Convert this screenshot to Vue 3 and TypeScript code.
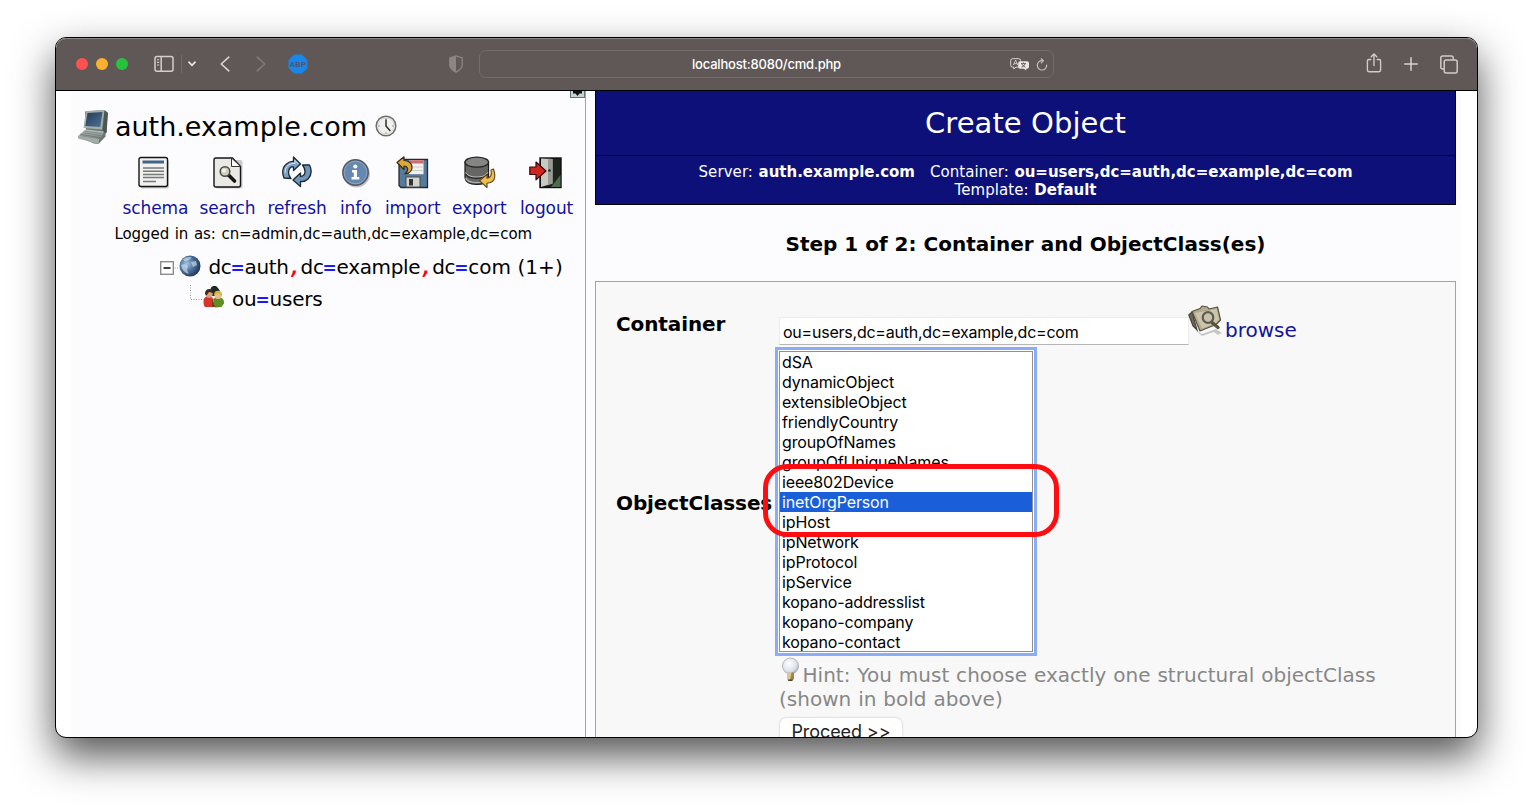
<script setup lang="ts">
interface Tool {
  id: string
  label: string
}

const tools: Tool[] = [
  { id: 'schema', label: 'schema' },
  { id: 'search', label: 'search' },
  { id: 'refresh', label: 'refresh' },
  { id: 'info', label: 'info' },
  { id: 'import', label: 'import' },
  { id: 'export', label: 'export' },
  { id: 'logout', label: 'logout' },
]

const objectClasses: string[] = [
  'dSA',
  'dynamicObject',
  'extensibleObject',
  'friendlyCountry',
  'groupOfNames',
  'groupOfUniqueNames',
  'ieee802Device',
  'inetOrgPerson',
  'ipHost',
  'ipNetwork',
  'ipProtocol',
  'ipService',
  'kopano-addresslist',
  'kopano-company',
  'kopano-contact',
]
const selected = 'inetOrgPerson'
</script>

<template>
  <div class="desktop">
    <div class="window">
      <header class="toolbar">
        <div class="lights"><i class="red" /><i class="yellow" /><i class="green" /></div>
        <svg class="t-sidebar" width="20" height="18" viewBox="0 0 20 18" fill="none" stroke="#d3cfcf" stroke-width="1.5">
          <rect x="1" y="1.6" width="18" height="14.6" rx="2" />
          <path d="M7.2 1.6v14.6" />
          <path d="M3 4.8h2.2M3 7.4h2.2M3 10h2.2" stroke-width="1.1" />
        </svg>
        <span class="t-divider" />
        <svg class="t-chev" width="8" height="6" viewBox="0 0 8 6" fill="none" stroke="#e8e6e6" stroke-width="1.7" stroke-linecap="round" stroke-linejoin="round">
          <path d="M1 1.2 4 4.3 7 1.2" />
        </svg>
        <svg class="t-back" width="10" height="16" viewBox="0 0 10 16" fill="none" stroke="#dad6d6" stroke-width="1.6" stroke-linecap="round" stroke-linejoin="round">
          <path d="M8.8 1.2 1.2 8l7.6 6.8" />
        </svg>
        <svg class="t-fwd" width="10" height="16" viewBox="0 0 10 16" fill="none" stroke="#827b7b" stroke-width="1.6" stroke-linecap="round" stroke-linejoin="round">
          <path d="M1.2 1.2 8.8 8l-7.6 6.8" />
        </svg>
        <svg class="t-abp" width="20" height="20" viewBox="0 0 20 20">
          <path d="M6 .5h8L19.5 6v8L14 19.500H6L.5 14V6z" fill="#1b86ea" />
          <text x="10" y="12.600" text-anchor="middle" class="abp-text">ABP</text>
        </svg>
        <svg class="t-shield" width="14" height="18" viewBox="0 0 14 18">
          <path d="M7 .9 13.200 3v7.200c0 3.300-3.600 5.500-6.200 6.900C4.400 15.700.8 13.500.8 10.200V3z" fill="none" stroke="#8b8585" stroke-width="1.300" />
          <path d="M7 .9V17C4.400 15.700.8 13.500.8 10.200V3z" fill="#8b8585" />
        </svg>
        <div class="url">
          <span />
          <span class="url-text">localhost:8080/cmd.php</span>
          <div class="url-icons">
            <svg width="20" height="13" viewBox="0 0 20 13">
              <path d="M2.500.7h6.300q1.800 0 1.800 1.800v4.800q0 1.800-1.800 1.800H6L3.800 11V9.100H2.500Q.7 9.100.7 7.300V2.500Q.7.7 2.500.7z" fill="none" stroke="#d8d4d4" stroke-width="1" />
              <path d="M3.300 7.200 5.600 2.300 7.900 7.200M4.100 5.700h3" fill="none" stroke="#d8d4d4" stroke-width=".9" />
              <path d="M10.200 3.300h6.800q2 0 2 2v3.500q0 2-2 2h-.8v1.800L14 10.800h-3.800q-2 0-2-2V5.300q0-2 2-2z" fill="#e9e7e7" />
              <path d="M11 5.600h5M13.500 4.500v1.100M15.200 5.800Q14 8.400 11.500 9.200M11.800 5.900q1 2.300 3.600 3.300" fill="none" stroke="#5f5858" stroke-width=".9" />
            </svg>
            <svg width="12" height="13" viewBox="0 0 12 13" fill="none" stroke="#c4bfbf" stroke-width="1.200" stroke-linecap="round" stroke-linejoin="round">
              <path d="M10.700 7.200A4.700 4.700 0 1 1 6.200 2.600" />
              <path d="M5.200.8 7.400 2.700 5.300 4.800" />
            </svg>
          </div>
        </div>
        <svg class="t-share" width="16" height="20" viewBox="0 0 16 20" fill="none" stroke="#cfcbcb" stroke-width="1.400" stroke-linecap="round" stroke-linejoin="round">
          <path d="M4.800 6.500H3q-1.600 0-1.600 1.600v9Q1.400 18.800 3 18.800h10q1.600 0 1.600-1.700v-9q0-1.600-1.600-1.600h-1.800" />
          <path d="M8 12.500V1.200M5.200 3.800 8 1l2.800 2.800" />
        </svg>
        <svg class="t-plus" width="14" height="14" viewBox="0 0 14 14" stroke="#d8d4d4" stroke-width="1.500" stroke-linecap="round">
          <path d="M7 .8v12.400M.8 7h12.400" />
        </svg>
        <svg class="t-tabs" width="18" height="19" viewBox="0 0 18 19" fill="none" stroke="#cfcbcb" stroke-width="1.500" stroke-linejoin="round">
          <rect x="4.200" y="5" width="13" height="13" rx="2" />
          <path d="M4 14H2.800q-2 0-2-2V3q0-2 2-2h8.400q2 0 2 2v1.800" />
        </svg>
      </header>

      <div class="page">
        <aside class="sidebar">
          <div class="expander">
            <svg width="15" height="15" viewBox="0 0 15 15">
              <rect x=".5" y=".5" width="14" height="14" fill="#c5d3d6" stroke="#66737a" />
              <path d="M6 3h3v5h3v2.500H9.500L7.500 13 5.500 10.500H3V8h3z" fill="#111" />
            </svg>
          </div>

          <div class="server">
            <svg width="34" height="38" viewBox="0 0 34 38">
              <defs>
                <linearGradient id="screen" x1="0" y1="0" x2="1" y2="1">
                  <stop offset="0" stop-color="#243a55" />
                  <stop offset="1" stop-color="#4f7396" />
                </linearGradient>
                <linearGradient id="body" x1="0" y1="0" x2="0" y2="1">
                  <stop offset="0" stop-color="#c4cac6" />
                  <stop offset="1" stop-color="#76807c" />
                </linearGradient>
              </defs>
              <path d="M8 3.500 26 2l4.500 2.500-1 20L21 36l-4-.5L2 29l1-3 6-3z" fill="#6d7874" />
              <path d="M9 3 27.500 2 25 21.500 6.500 20z" fill="#a3aeab" />
              <path d="M10.500 5 25.500 4 23.300 19 8.300 18z" fill="url(#screen)" />
              <path d="M27.500 2 31 5 29.500 25l-4-1z" fill="#4c5753" />
              <path d="M8 21.500 27 23.500 23 31 2 27.500z" fill="url(#body)" />
              <path d="M1 27.500 22.500 31 21.500 36 1 30.500z" fill="#a2aba7" />
              <path d="M4 26.500 23 29.500M6 24.800l18 2.800M7.500 23.200l17 2.300" stroke="#68736f" stroke-width=".7" fill="none" />
              <path d="M22.500 31 28.500 25v3.500L21.500 36z" fill="#6b7571" />
            </svg>
            <span class="server-name">auth.example.com</span>
            <svg class="clock" width="22" height="22" viewBox="0 0 22 22">
              <circle cx="11" cy="11" r="9.800" fill="#f1f1ef" stroke="#6e6e6c" stroke-width="1.500" />
              <circle cx="11" cy="11" r="8" fill="none" stroke="#dadad8" stroke-width="1" />
              <path d="M11 3v2M11 17v2M3 11h2M17 11h2" stroke="#999" stroke-width="1" />
              <path d="M11 4.500V11l4.300 5" fill="none" stroke="#2c2c2c" stroke-width="1.500" />
            </svg>
          </div>

          <nav class="tools">
            <a v-for="tool in tools" :key="tool.id" class="tool">
              <svg width="34" height="34" viewBox="0 0 34 34">
                <template v-if="tool.id === 'schema'">
                  <rect x="3.500" y="3.500" width="28.500" height="29" rx="2" fill="#000" opacity=".2" />
                  <rect x="2" y="1.500" width="28.500" height="29" rx="2" fill="#f1f1f0" stroke="#151515" stroke-width="1.400" />
                  <rect x="5.500" y="4.500" width="21.500" height="3" fill="#3f6687" />
                  <path d="M6 12h21M6 15.200h21M6 18.400h21M6 21.600h21M6 25.500h13" stroke="#777" stroke-width="1.500" />
                </template>
                <template v-else-if="tool.id === 'search'">
                  <rect x="4.500" y="4" width="27" height="28.500" rx="2" fill="#000" opacity=".2" />
                  <path d="M5 2h16.500L29.500 10.500V29q0 2-2 2H5q-2 0-2-2V4q0-2 2-2z" fill="#eae9e6" stroke="#151515" stroke-width="1.400" />
                  <path d="M20.500 2v8.500h9z" fill="#fff" stroke="#333" stroke-width="1" />
                  <path d="M17.500 19 23.500 25" stroke="#151515" stroke-width="3.600" stroke-linecap="round" />
                  <circle cx="14" cy="15.500" r="4.800" fill="#cfd0bf" stroke="#4b4b44" stroke-width="1.500" />
                  <circle cx="13" cy="14.500" r="2" fill="#f4f4ea" />
                </template>
                <template v-else-if="tool.id === 'refresh'">
                  <path d="M4 22Q.5 13 6.500 8 10 5 13.500 5.500V1l7 7-7 6.500V11Q9 10.500 8.500 16 8.500 20 11 22.500z" fill="#7c9fc3" stroke="#1b2733" stroke-width="1.300" stroke-linejoin="round" />
                  <path d="M29.500 9Q33.500 17 28 23 25 26 20.500 25.500V30.500l-7.500-6.500 7.500-7V20.500Q25 20 25 15.500 25 12 22.500 9z" fill="#6f95bb" stroke="#1b2733" stroke-width="1.300" stroke-linejoin="round" />
                  <path d="M5 17Q5 9 12 7.500h3V4.500l3.500 3.500" fill="none" stroke="#d7e4f0" stroke-width="1" />
                </template>
                <template v-else-if="tool.id === 'info'">
                  <circle cx="17.500" cy="18" r="13.500" fill="#000" opacity=".22" />
                  <circle cx="16.500" cy="16.500" r="12.700" fill="#6688b0" stroke="#56595e" stroke-width="1.500" />
                  <circle cx="16.500" cy="16.500" r="11.300" fill="none" stroke="#8ba6c6" stroke-width="1" />
                  <circle cx="16.300" cy="10.500" r="2.100" fill="#fff" />
                  <path d="M13 14h5v7h2.300v2.500H12.500V21h2.300v-4.500H13z" fill="#fff" />
                </template>
                <template v-else-if="tool.id === 'import'">
                  <path d="M5 3.500h26.500v28H5L3 29.500V5.500z" fill="#567a99" stroke="#202a33" stroke-width="1.300" />
                  <rect x="13" y="4.200" width="14.500" height="14" fill="#f3f0f0" />
                  <path d="M13 4.200h14.500v3.400H13z" fill="#cf6a70" />
                  <path d="M13 11h14.500M13 14.500h14.500" stroke="#ccc" stroke-width="1" />
                  <rect x="10" y="21" width="14" height="10" fill="#d4d4ce" stroke="#4a4a48" stroke-width="1" />
                  <rect x="13" y="23" width="4" height="6.500" fill="#333" />
                  <path d="M1 6.500 8 .8V4.500Q16 5 16 12 15.500 17 9 18 12.500 14.500 11.500 12 10.500 10 8 10v3.500z" fill="#dfa63b" stroke="#3b2a0a" stroke-width="1.200" stroke-linejoin="round" />
                </template>
                <template v-else-if="tool.id === 'export'">
                  <path d="M2 6v16Q3 28.500 13.500 28.500T25.500 22V6z" fill="#666664" stroke="#191919" stroke-width="1.200" />
                  <path d="M2.500 16.500q2 4.500 11 4.500t11.500-4.500M2.500 22q2 4.500 11 4.500T25 22" fill="none" stroke="#b9b9b9" stroke-width="1.200" />
                  <path d="M2.500 17.800q2 4.500 11 4.500t11.500-4.500" fill="none" stroke="#222" stroke-width="1.200" />
                  <ellipse cx="13.800" cy="6.200" rx="11.800" ry="5" fill="#858583" stroke="#222" stroke-width="1.200" />
                  <path d="M30.500 13Q35 26.500 24 27.200V31.500L16.500 24.700 24 18.500v3.800Q29.500 22 28 14z" fill="#f0bd52" stroke="#5b4518" stroke-width="1.100" stroke-linejoin="round" />
                </template>
                <template v-else>
                  <rect x="11" y="2" width="21" height="29.500" fill="#1d241d" stroke="#0d0d0d" stroke-width="1.400" />
                  <path d="M22 31 31.500 19V31z" fill="#4d6b4c" />
                  <path d="M12 2.500 23.500 3v24.500L12 31z" fill="#c9c9c4" />
                  <path d="M19 2.800 23.500 3v24.500l-4.500 1.400z" fill="#9a9a95" />
                  <circle cx="20.500" cy="14.500" r="1.200" fill="#222" />
                  <path d="M.8 11H7V6l10 9-10 8.800v-5.300H.8z" fill="#cf2620" stroke="#3c0705" stroke-width="1.200" stroke-linejoin="round" />
                </template>
              </svg>
              <span>{{ tool.label }}</span>
            </a>
          </nav>

          <div class="logged">Logged in as: cn=admin,dc=auth,dc=example,dc=com</div>

          <div class="tree">
            <div class="node root">
              <svg width="20" height="14" viewBox="0 0 20 14">
                <rect x=".7" y=".7" width="12.600" height="12.600" fill="#fff" stroke="#8c8c8c" stroke-width="1.400" />
                <path d="M3.500 7h7" stroke="#111" stroke-width="1.600" />
                <path d="M14.500 7H20" stroke="#999" stroke-width="1" stroke-dasharray="1 1.500" />
              </svg>
              <svg class="globe" width="22" height="22" viewBox="0 0 22 22">
                <defs>
                  <radialGradient id="earth" cx=".35" cy=".4" r=".7">
                    <stop offset="0" stop-color="#a7c3e0" />
                    <stop offset=".5" stop-color="#4c719f" />
                    <stop offset="1" stop-color="#1c2c4a" />
                  </radialGradient>
                </defs>
                <circle cx="11" cy="11" r="10.500" fill="url(#earth)" />
                <path d="M4 4.500Q8 1 13 2.500L10 5 6 6.500zM2 10q4-2 7 1l-1 4 2 4Q3 17 2 10zM12 7l5-1 1 4-4 2z" fill="#dbe6ee" opacity=".6" />
              </svg>
              <span class="dn">dc<b>=</b>auth<em>,</em>dc<b>=</b>example<em>,</em>dc<b>=</b><span class="tail">com (1+)</span></span>
            </div>
            <div class="node child">
              <svg class="elbow" width="13" height="16" viewBox="0 0 13 16">
                <path d="M.5 0v14.500H13" fill="none" stroke="#999" stroke-width="1" stroke-dasharray="1 1.500" />
              </svg>
              <svg class="people" width="22" height="22" viewBox="0 0 22 22">
                <path d="M8 1.500 10 0h3l2 2 2 3-2 5H8L7 5z" fill="#1d2b22" />
                <path d="M.5 15q0-4 4-4.500l5 1 2 9.500H2Q.5 20 .5 15z" fill="#d8342b" />
                <path d="M10 13q3-2.500 7-1.500 4.500 1 4 6l-2.500 3.500-6.500.5z" fill="#5f8f22" />
                <path d="M9 12.500 12.500 21H9z" fill="#7d3d1c" />
                <circle cx="6" cy="8" r="3.700" fill="#d9a37c" />
                <path d="M2 8Q2 3 6.500 3q4 .5 3.500 4L6 6 3.500 9.500z" fill="#3a2a20" />
                <circle cx="15" cy="9.500" r="3.600" fill="#e8bd8c" />
                <path d="M11 9Q11 4.500 15.500 4.700q4 .5 3.500 5.300L15 7.500z" fill="#d9b43b" />
              </svg>
              <span class="dn">ou<b>=</b>users</span>
            </div>
          </div>
        </aside>

        <main class="main">
          <div class="title">Create Object</div>
          <div class="subtitle">
            <div><span>Server: <strong>auth.example.com</strong></span><span class="second">Container: <strong>ou=users,dc=auth,dc=example,dc=com</strong></span></div>
            <div>Template: <strong>Default</strong></div>
          </div>
          <h4 class="step">Step 1 of 2: Container and ObjectClass(es)</h4>

          <form class="panel" @submit.prevent>
            <label class="name">Container</label>
            <div class="container-row">
              <div class="input">ou=users,dc=auth,dc=example,dc=com</div>
              <svg class="folder" width="36" height="34" viewBox="0 0 36 34">
                <path d="M7 26 14 30l14-5 6 4-4 2-4-3-12 4z" fill="#000" opacity=".2" />
                <path d="M.8 11 4 8 9 26 5 22z" fill="#6f6957" stroke="#47433a" stroke-width="1.200" />
                <path d="M4 7.500 12 4.500l2-2.500 5.500 1L21 5l8.500-2L32.500 16 28 20.500 12 27z" fill="#b3aa91" stroke="#55503f" stroke-width="1.200" stroke-linejoin="round" />
                <path d="M7 9 28.500 5 31 15.500l-3 3.500-14 5.500z" fill="#cdc4ac" />
                <path d="M24 18.500 30 23.500" stroke="#55543c" stroke-width="3.400" stroke-linecap="round" />
                <circle cx="20" cy="13.500" r="5.300" fill="#c9c3ae" stroke="#5d5c50" stroke-width="2.200" />
              </svg>
              <a class="browse">browse</a>
            </div>

            <label class="name classes">ObjectClasses</label>
            <div class="listbox">
              <div
                v-for="name in objectClasses"
                :key="name"
                class="option"
                :class="{ active: name === selected }"
              >{{ name }}</div>
              <div class="marker" />
            </div>

            <div class="footer">
              <div class="hint"><svg width="22" height="26" viewBox="0 0 22 26">
                <defs>
                  <radialGradient id="bulb" cx=".4" cy=".35" r=".7">
                    <stop offset="0" stop-color="#fff" />
                    <stop offset=".7" stop-color="#dcdfec" />
                    <stop offset="1" stop-color="#a0a3af" />
                  </radialGradient>
                </defs>
                <circle cx="11.500" cy="9" r="8" fill="url(#bulb)" stroke="#b5b7bd" stroke-width="1" />
                <path d="M8 15.500h7v6l-1.500 2h-4l-1.500-2z" fill="#dcc68c" />
                <path d="M12.500 15.500H15v6l-1.500 2h-2.500z" fill="#9a8550" />
                <path d="M8.500 22.500h5.500l-1 1.500H9.500z" fill="#4d452e" />
              </svg>Hint: You must choose exactly one structural objectClass<br>(shown in bold above)</div>
              <button class="proceed" type="submit">Proceed &gt;&gt;</button>
            </div>
          </form>
        </main>
      </div>
    </div>
  </div>
</template>

<style>
body {
  background: #fff;
  overflow: hidden;
}
</style>

<style scoped>
.desktop {
  box-sizing: border-box;
  width: 1533px;
  height: 811px;
  padding: 37px 55px;
  overflow: hidden;
  background: #fff;
  font-family: "DejaVu Sans", Verdana, sans-serif;
  color: #000;
}
.window {
  box-sizing: border-box;
  width: 1423px;
  height: 701px;
  border: 1px solid #000;
  border-radius: 11px;
  overflow: hidden;
  background: #fff;
  box-shadow: 0 18px 40px rgba(0, 0, 0, 0.68);
}
svg {
  display: block;
  flex: none;
}

/* browser toolbar */
.toolbar {
  box-sizing: border-box;
  display: flex;
  align-items: center;
  height: 53px;
  border-bottom: 1px solid #000;
  border-radius: 10px 10px 0 0;
  background: #5f5857;
  box-shadow: inset 0 1px 0 #8b8686;
}
.lights {
  display: flex;
  gap: 8px;
  margin-left: 20px;
}
.lights i {
  width: 12px;
  height: 12px;
  border-radius: 50%;
}
.red { background: #ff5150; }
.yellow { background: #fdb02f; }
.green { background: #29c23f; }
.t-sidebar { margin-left: 25.5px; }
.t-divider {
  width: 1px;
  height: 18px;
  margin-left: 7.5px;
  background: #726b6b;
}
.t-chev { margin-left: 6px; }
.t-back { margin-left: 23.5px; }
.t-fwd { margin-left: 26px; }
.t-abp { margin-left: 22.5px; }
.abp-text {
  font: bold 7.5px "Liberation Sans", Arial, sans-serif;
  fill: #4a5766;
  letter-spacing: 0.3px;
}
.t-shield { margin-left: 141px; }
.url {
  box-sizing: border-box;
  display: grid;
  grid-template-columns: 1fr auto 1fr;
  align-items: center;
  width: 575px;
  height: 28px;
  margin-left: 16px;
  border: 1px solid #746d6d;
  border-radius: 7px;
}
.url-text {
  font: 500 13px/16px Inter, sans-serif;
  letter-spacing: -0.2px;
  color: #fff;
}
.url-icons {
  display: flex;
  align-items: center;
  justify-content: flex-end;
  gap: 6px;
  padding-right: 5px;
}
.t-share {
  margin-left: 312px;
  margin-bottom: 2px;
}
.t-plus { margin-left: 22px; }
.t-tabs { margin-left: 22px; }

/* page */
.page {
  display: flex;
  height: 646px;
  margin: 0 16px 0 15px;
  overflow: hidden;
  background: #fcfcfe;
}
.sidebar {
  position: relative;
  box-sizing: border-box;
  flex: none;
  width: 515px;
  border-right: 1px solid #a0a0c0;
}
.expander {
  position: absolute;
  top: -8px;
  right: 0;
}
.server {
  display: flex;
  align-items: center;
  height: 39px;
  margin-top: 16px;
  padding-left: 6px;
}
.server-name {
  margin: 0 8px 0 4px;
  font-size: 27px;
  line-height: 38px;
  letter-spacing: -0.03px;
}
.clock { margin-bottom: 1px; }
.tools {
  display: grid;
  grid-template-columns: 77px 68px 72.500px 45px 67px 68px 54px;
  padding: 10px 0 0 51.500px;
}
.tool {
  display: flex;
  flex-direction: column;
  align-items: flex-start;
  color: #1212a0;
  font-size: 17px;
  line-height: 24px;
  letter-spacing: -0.1px;
}
.tool span { margin-top: 6px; }
.tool svg { margin-left: 14px; }
.tool:nth-child(2) svg { margin-left: 11px; }
.tool:nth-child(3) svg { margin-left: 12px; }
.tool:nth-child(4) svg { margin-left: -1px; }
.tool:nth-child(5) svg { margin-left: 11px; }
.tool:nth-child(6) svg { margin-left: 11px; }
.tool:nth-child(7) svg { margin-left: 9px; }
.logged {
  margin: 4px 0 0 43.500px;
  font-size: 15px;
  line-height: 20px;
  letter-spacing: -0.08px;
  word-spacing: 1px;
}
.tree { margin-top: 7px; }
.node {
  display: flex;
  align-items: center;
  height: 32px;
}
.root { padding-left: 89px; }
.root > svg { margin-top: 1px; }
.root > .globe { margin: 0 0 2px -1px; }
.child { padding-left: 119px; }
.people { margin-bottom: 5px; }
.elbow { margin-bottom: 12px; }
.dn {
  font-size: 20px;
  line-height: 32px;
  letter-spacing: -0.350px;
  white-space: nowrap;
}
.root .dn { margin-left: 7.500px; }
.child .dn { margin-left: 7px; }
.child .dn { letter-spacing: -0.200px; }
.dn b {
  display: inline-block;
  width: 13px;
  color: #1a1aff;
  font-size: 17px;
  text-indent: -1px;
}
.dn em {
  display: inline-block;
  width: 12px;
  color: #ff0013;
  font: italic bold 20px/20px "DejaVu Sans Mono", monospace;
  text-align: center;
}
.tail { letter-spacing: 0.050px; }

/* main column */
.main {
  width: 861px;
  margin-left: 9px;
  flex: none;
}
.title {
  box-sizing: border-box;
  height: 65px;
  padding-top: 1px;
  border: 1px solid #000;
  border-top: 0;
  background: #0d1079;
  color: #fff;
  font-size: 29px;
  line-height: 62px;
  letter-spacing: 0.080px;
  text-align: center;
}
.subtitle {
  box-sizing: border-box;
  height: 49px;
  padding-top: 7px;
  border: 1px solid #000;
  border-top: 0;
  background: #0d1079;
  color: #fff;
  font-size: 15px;
  line-height: 18px;
  letter-spacing: 0.080px;
  word-spacing: 0.700px;
  text-align: center;
}
.subtitle strong { letter-spacing: -0.010px; }
.second { margin-left: 15px; }
.step {
  margin: 27px 0 25px;
  font-size: 20px;
  line-height: 24px;
  font-weight: bold;
  text-align: center;
}
.panel {
  box-sizing: border-box;
  display: grid;
  grid-template-columns: 163px 1fr;
  grid-template-rows: 49px 309px auto;
  align-items: center;
  height: 500px;
  padding: 16px 0 0 20px;
  align-content: start;
  border: 1px solid #a0a0c0;
  background: #f8f8f8;
}
.name {
  padding-top: 2px;
  font-size: 20px;
  line-height: 24px;
  font-weight: bold;
  letter-spacing: -0.100px;
  white-space: nowrap;
}
.container-row {
  display: flex;
  align-items: flex-start;
  height: 49px;
}
.input {
  box-sizing: border-box;
  width: 410px;
  height: 28px;
  margin-top: 19px;
  padding-left: 2px;
  border: 1px solid #ececec;
  border-bottom-color: #b5b5b5;
  background: #fff;
  font: 16px/28px Inter, sans-serif;
  letter-spacing: -0.230px;
  text-indent: 1px;
}
.folder { margin: 6px 1px 0 -1px; }
.browse {
  margin-top: 20px;
  color: #1212a0;
  font-size: 20px;
  line-height: 24px;
}
.listbox {
  position: relative;
  box-sizing: border-box;
  align-self: start;
  width: 254px;
  height: 301px;
  margin-top: 4px;
  border: 1px solid #909090;
  outline: 3px solid #8aadf5;
  outline-offset: 1px;
  background: #fff;
  box-shadow: 0 0 0 1px #fff;
}
.option {
  width: 250px;
  height: 20px;
  padding-left: 2px;
  font: 16px/21px Inter, sans-serif;
  letter-spacing: -0.140px;
}
.active {
  background: #1a5ed9;
  color: #fff;
}
.marker {
  position: absolute;
  box-sizing: border-box;
  top: 112px;
  left: -17px;
  width: 296px;
  height: 73px;
  border: 5px solid #ff0d10;
  border-radius: 24px;
}
.footer {
  grid-column: 2;
  padding-top: 7px;
}
.hint {
  color: #878787;
  font-size: 20px;
  line-height: 24px;
  letter-spacing: 0.020px;
  word-spacing: 0.500px;
  white-space: nowrap;
}
.hint svg {
  display: inline-block;
  margin: -6px 1.5px 0 0;
  vertical-align: -1px;
}
.proceed {
  display: block;
  width: 122px;
  height: 28px;
  margin: 7px 0 0 1px;
  padding: 0;
  border: 0;
  border-radius: 6px;
  background: #fff;
  box-shadow: 0 0 2px rgba(0, 0, 0, 0.3);
  color: #222;
  font: 18px/28px Inter, sans-serif;
  letter-spacing: -0.090px;
}
</style>
